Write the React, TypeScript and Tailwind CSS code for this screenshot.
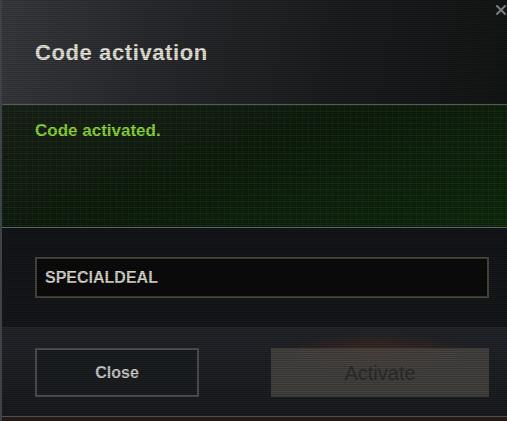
import { X } from 'lucide-react'

const font = { fontFamily: '"Liberation Sans", Arial, sans-serif' }

export default function App() {
  return (
    <div
      style={font}
      className="relative w-[507px] h-[421px] overflow-hidden bg-[#1a1b1e] border-l-2 border-[#3e4145]"
    >
      {/* scanlines over the whole panel */}
      <div className="pointer-events-none absolute inset-0 bg-[repeating-linear-gradient(180deg,rgba(0,0,0,0.2)_0px,rgba(0,0,0,0.2)_1px,transparent_1px,transparent_2px)] z-10" />

      <button className="absolute top-[2px] right-[-2px] text-[#7b7d80] z-20">
        <X className="w-[16px] h-[16px]" strokeWidth={3} />
      </button>

      {/* Header */}
      <div className="h-[104px] pt-[42px] pl-[33px] bg-[linear-gradient(100deg,#393b3f_0%,#27292c_35%,#1b1c1e_70%,#141515_100%)]">
        <h1 className="text-[22px] leading-[22px] font-bold text-[#e7e5dc] tracking-[0.6px]">
          Code activation
        </h1>
      </div>

      <div className="h-px bg-[#6b6f72]" />

      {/* Status panel */}
      <div className="h-[122px] pt-[17px] pl-[33px] bg-[#0f1a0e] bg-[linear-gradient(rgba(70,120,60,0.09)_1px,transparent_1px),linear-gradient(90deg,rgba(70,120,60,0.09)_1px,transparent_1px),linear-gradient(160deg,#1a2119_0%,#0e1d0c_45%,#0f2a0d_100%)] bg-[size:6px_6px,6px_6px,100%_100%]">
        <p className="text-[17px] leading-[17px] font-bold text-[#8cd63b]">Code activated.</p>
      </div>

      <div className="h-px bg-[#5d6164]" />

      {/* Input area */}
      <div className="h-[99px] pt-[29px] pl-[33px] pr-[18px] bg-[linear-gradient(180deg,#141518_0%,#16171a_100%)]">
        <div className="h-[41px] border-2 border-[#46453f] bg-[#0b0b0c] flex items-center pl-[8px]">
          <span className="text-[16px] font-bold text-[#d6d4ca]">SPECIALDEAL</span>
        </div>
      </div>

      {/* Footer */}
      <div className="relative h-[89px] pt-[21px] pl-[33px] pr-[17px] flex gap-[72px] bg-[linear-gradient(180deg,#23262b_0%,#1d1f23_60%,#1a1b1e_100%)]">
        <div className="absolute left-[280px] top-[6px] w-[190px] h-[40px] rounded-full bg-[radial-gradient(ellipse_at_center,rgba(120,45,30,0.45)_0%,transparent_70%)]" />
        <button className="w-[164px] h-[49px] border-2 border-[#4d5052] bg-[#1b1e21] text-[16px] font-bold text-[#c9c9c7]">
          Close
        </button>
        <button className="relative w-[218px] h-[49px] bg-[#4d4b47]/80 text-[20px] text-[#2c2c2c]">
          Activate
        </button>
      </div>

      <div className="h-px bg-[#5c5f62]" />
      <div className="h-[4px] bg-[#2a1c16]" />
    </div>
  )
}
